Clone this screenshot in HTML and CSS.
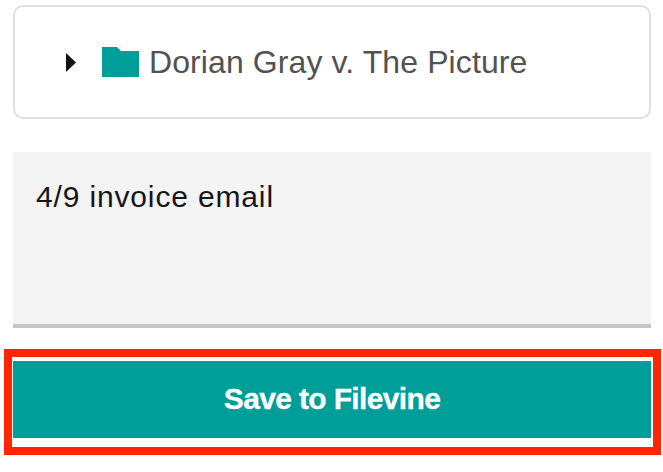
FILE: index.html
```html
<!DOCTYPE html>
<html lang="en">
<head>
    <meta charset="UTF-8">
    <title>Save to Filevine</title>
    <link rel="stylesheet" href="styles.css">
</head>
<body>
    <div class="tree-box">
        <svg class="caret" width="10" height="19" viewBox="0 0 10 19"><path d="M0 0L10 9.5L0 19Z" fill="#111"/></svg>
        <svg class="folder" width="37" height="30" viewBox="0 0 37 30"><path d="M0 0H15L19 4H37V30H0Z" fill="#009e98"/></svg>
        <span class="project-name">Dorian Gray v. The Picture</span>
    </div>
    <div class="note-field">4/9 invoice email</div>
    <div class="highlight">
        <button class="save-button">Save to Filevine</button>
    </div>
</body>
</html>
```
FILE: styles.css
```css
html, body {
    margin: 0;
    padding: 0;
}
body {
    width: 663px;
    height: 472px;
    background-color: #fff;
    font-family: "Liberation Sans", Arial, sans-serif;
    overflow: hidden;
}
.tree-box {
    display: flex;
    align-items: center;
    box-sizing: border-box;
    width: 638px;
    height: 114px;
    margin: 5px 0 0 13px;
    padding: 0 0 0 51px;
    border: 2px solid #e0e0e0;
    border-radius: 10px;
}
.caret {
    margin-right: 26px;
}
.folder {
    margin-right: 10px;
}
.project-name {
    font-size: 32px;
    letter-spacing: 0.1px;
    color: #525252;
}
.note-field {
    box-sizing: border-box;
    width: 638px;
    height: 176px;
    margin: 33px 0 0 13px;
    padding: 28px 23px;
    background-color: #f3f3f3;
    border-bottom: 4px solid #c6c6c6;
    font-size: 30px;
    letter-spacing: 0.85px;
    color: #161616;
}
.highlight {
    box-sizing: border-box;
    width: 657px;
    height: 106px;
    margin: 21px 0 0 4px;
    padding: 4px 2px 9px 1px;
    border: 8px solid #ff2600;
}
.save-button {
    display: block;
    width: 100%;
    height: 100%;
    padding: 0 0 2px;
    border: none;
    background-color: #009e98;
    color: #fff;
    font-family: inherit;
    font-size: 30px;
    font-weight: bold;
    letter-spacing: -0.65px;
    -webkit-text-stroke: 0.3px #fff;
}
```
